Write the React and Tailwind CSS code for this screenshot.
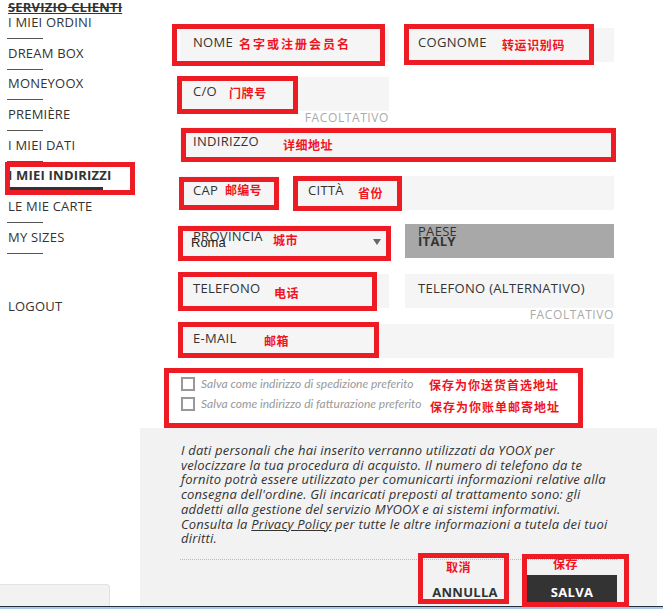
import React from 'react';

const menu = ['I MIEI ORDINI', 'DREAM BOX', 'MONEYOOX', 'PREMIÈRE', 'I MIEI DATI', 'I MIEI INDIRIZZI', 'LE MIE CARTE', 'MY SIZES'];

const Field = ({ label, className = '' }) => (
  <div className={`h-[34px] bg-[#f5f5f5] pl-[13px] pt-[6px] text-[13px] leading-[16px] font-medium tracking-[0.3px] text-[#333] ${className}`}>{label}</div>
);

const Hint = () => (
  <div className="absolute right-0 top-full mt-[1px] text-[12px] leading-[12px] tracking-[0.6px] text-[#aaa]">FACOLTATIVO</div>
);

// annotation overlay: red frames and chinese notes drawn over the screenshot
const boxes = [
  'left-[172px] top-[24px] w-[213px] h-[42px]',
  'left-[404px] top-[24px] w-[190px] h-[41px]',
  'left-[177px] top-[76px] w-[121px] h-[38px]',
  'left-[181px] top-[128px] w-[435px] h-[34px]',
  'left-[179px] top-[177px] w-[100px] h-[33px]',
  'left-[293px] top-[176px] w-[109px] h-[35px]',
  'left-[178px] top-[226px] w-[213px] h-[35px]',
  'left-[178px] top-[272px] w-[199px] h-[39px]',
  'left-[178px] top-[322px] w-[201px] h-[36px]',
  'left-[164px] top-[368px] w-[419px] h-[60px]',
  'left-[5px] top-[162px] w-[130px] h-[33px]',
  'left-[418px] top-[553px] w-[91px] h-[51px]',
  'left-[522px] top-[554px] w-[107px] h-[53px]',
];

const notes = [
  ['名字或注册会员名', 'left-[239px] top-[38px] tracking-[2px]'],
  ['转运识别码', 'left-[502px] top-[39px] tracking-[0.6px]'],
  ['门牌号', 'left-[229px] top-[87px] tracking-[0.6px]'],
  ['详细地址', 'left-[283px] top-[139px] tracking-[0.5px]'],
  ['邮编号', 'left-[225px] top-[184px] tracking-[0.3px]'],
  ['省份', 'left-[358px] top-[187px] tracking-[0.5px]'],
  ['城市', 'left-[273px] top-[234px] tracking-[0.5px]'],
  ['电话', 'left-[274px] top-[287px] tracking-[0.5px]'],
  ['邮箱', 'left-[264px] top-[335px] tracking-[0.5px]'],
  ['保存为你送货首选地址', 'left-[429px] top-[379px] tracking-[1px]'],
  ['保存为你账单邮寄地址', 'left-[430px] top-[401px] tracking-[1px]'],
  ['取消', 'left-[446px] top-[561px] tracking-[0.5px]'],
  ['保存', 'left-[553px] top-[558px] tracking-[0.5px]'],
];

const paragraph = [
  'I dati personali che hai inserito verranno utilizzati da YOOX per',
  'velocizzare la tua procedura di acquisto. Il numero di telefono da te',
  'fornito potrà essere utilizzato per comunicarti informazioni relative alla',
  "consegna dell'ordine. Gli incaricati preposti al trattamento sono: gli",
  'addetti alla gestione del servizio MYOOX e ai sistemi informativi.',
];

export default function App() {
  return (
    <div className="relative w-[663px] h-[609px] overflow-hidden bg-white font-['Open_Sans',sans-serif] text-[#333]">
      <div className="flex h-[606px]">
        <aside className="w-[140px] flex flex-col">
          <div className="pl-[8px] h-[14px] text-[13px] leading-[14px] font-bold tracking-[0.2px] [text-decoration-line:underline_line-through]">SERVIZIO CLIENTI</div>
          {menu.map((item) => {
            const active = item === 'I MIEI INDIRIZZI';
            return (
              <div key={item} className="pl-[8px] h-[30.7px]">
                <div className={`text-[13px] leading-[16px] tracking-[0.2px] whitespace-nowrap ${active ? 'font-bold' : ''}`}>{item}</div>
                {active ? (
                  <div className="mt-[3.5px] ml-[2px] h-[3px] w-[93px] bg-[#333]" />
                ) : (
                  <div className="mt-[8px] -ml-[1px] h-px w-[36px] bg-[#555]" />
                )}
              </div>
            );
          })}
          <div className="pl-[8px] mt-[38.4px] text-[13px] leading-[16px] tracking-[0.2px]">LOGOUT</div>
          <div className="mt-auto h-[22px] w-[110px] bg-[#f2f2f2] border-t border-r border-[#e2e2e2] rounded-tr-[4px]" />
        </aside>

        <main className="w-[517px] flex flex-col">
          <div className="pl-[40px] pr-[43px] pt-[28px] flex flex-col">
            <div className="grid grid-cols-2 gap-[16px]">
              <Field label="NOME" />
              <Field label="COGNOME" />
            </div>
            <div className="mt-[15px] grid grid-cols-2 gap-[16px]">
              <div className="relative">
                <Field label="C/O" />
                <Hint />
              </div>
            </div>
            <Field label="INDIRIZZO" className="mt-[16px]" />
            <div className="mt-[15px] flex gap-[15px]">
              <Field label="CAP" className="w-[100px]" />
              <Field label="CITTÀ" className="flex-1" />
            </div>
            <div className="mt-[15px] grid grid-cols-2 gap-[16px]">
              <div className="relative h-[34px] bg-[#f5f5f5]">
                <div className="absolute left-[13px] top-[3px] text-[13px] leading-[16px] font-medium tracking-[0.3px]">PROVINCIA</div>
                <div className="absolute left-[11px] top-[10px] font-['Liberation_Sans',sans-serif] text-[13px] leading-[16px] text-[#222]">Roma</div>
                <div className="absolute right-[8px] top-[14px] w-0 h-0 border-l-[4px] border-r-[4px] border-t-[6px] border-l-transparent border-r-transparent border-t-[#666]" />
              </div>
              <div className="h-[34px] -mt-[1px] bg-[#a8a8a8] pl-[13px] pt-[2px] text-[13px] leading-[10px] tracking-[0.3px]">
                <div>PAESE</div>
                <div className="font-bold">ITALY</div>
              </div>
            </div>
            <div className="mt-[15px] grid grid-cols-2 gap-[16px]">
              <Field label="TELEFONO" />
              <div className="relative">
                <Field label="TELEFONO (ALTERNATIVO)" />
                <Hint />
              </div>
            </div>
            <Field label="E-MAIL" className="mt-[16px]" />
          </div>

          <div className="pl-[41px] mt-[19px] flex flex-col gap-[6px] font-['Lato',sans-serif] italic text-[12px] leading-[14px] text-[#999]">
            <label className="flex items-center gap-[6px]">
              <span className="w-[14px] h-[14px] border-2 border-[#999] bg-white" />
              Salva come indirizzo di spedizione preferito
            </label>
            <label className="flex items-center gap-[6px]">
              <span className="w-[14px] h-[14px] border-2 border-[#999] bg-white" />
              Salva come indirizzo di fatturazione preferito
            </label>
          </div>

          <section className="mt-[17px] flex-1 bg-[#f2f2f2] pl-[41px] pr-[40px] pt-[15px] flex flex-col">
            <div className="italic text-[13px] leading-[14.7px] tracking-[0.2px] text-[#333] whitespace-nowrap">
              {paragraph.map((line) => (
                <div key={line}>{line}</div>
              ))}
              <div>
                Consulta la <span className="underline">Privacy Policy</span> per tutte le altre informazioni a tutela dei tuoi
              </div>
              <div>diritti.</div>
            </div>
            <div className="mt-[13px] -ml-[1px] border-t border-dotted border-[#bbb]" />
            <div className="mt-[15px] flex justify-end gap-[17px]">
              <button className="w-[90px] h-[30px] pt-[5px] text-[13px] font-bold tracking-[0.3px] text-[#333]">ANNULLA</button>
              <button className="w-[90px] h-[30px] pt-[5px] bg-[#333] text-[13px] font-bold tracking-[0.3px] text-white">SALVA</button>
            </div>
          </section>
        </main>
      </div>
      <div className="h-[3px] border-t border-[#23303d] bg-[#a9c9e8]" />

      {boxes.map((b) => (
        <div key={b} className={`absolute border-[5px] border-[#ed1c24] ${b}`} />
      ))}
      {notes.map(([t, c]) => (
        <div key={t + c} className={`absolute font-['Noto_Sans_CJK_SC',sans-serif] font-bold text-[12px] leading-[12px] text-[#f0141e] whitespace-nowrap ${c}`}>{t}</div>
      ))}
    </div>
  );
}
